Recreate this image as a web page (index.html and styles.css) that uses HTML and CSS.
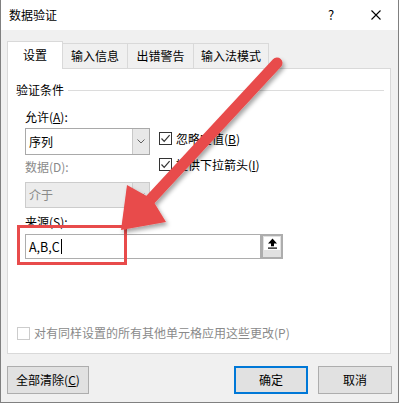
FILE: index.html
```html
<!DOCTYPE html>
<html lang="zh-CN">
<head>
<meta charset="utf-8">
<title>数据验证</title>
<link rel="stylesheet" href="styles.css">
</head>
<body>
<div class="window">
  <div class="titlebar">
    <span class="title">数据验证</span>
    <span class="help">?</span>
    <svg class="close" width="10" height="10" viewBox="0 0 10 10"><path d="M0.5 0.5 L9.5 9.5 M9.5 0.5 L0.5 9.5" stroke="#000" stroke-width="1.1" fill="none"/></svg>
  </div>
  <div class="tabs">
    <div class="tab active t1">设置</div>
    <div class="tab t2">输入信息</div>
    <div class="tab t3">出错警告</div>
    <div class="tab t4">输入法模式</div>
  </div>
  <div class="panel">
    <div class="group-title"><span>验证条件</span><span class="rule"></span></div>
    <div class="group">
      <div class="label l-allow">允许(<u>A</u>):</div>
      <div class="row">
        <div class="combo">
          <span class="combo-text">序列</span>
          <span class="combo-btn"><svg width="8" height="5" viewBox="0 0 8 5"><path d="M0.5 0.5 L4 4 L7.5 0.5" stroke="#606060" stroke-width="1" fill="none"/></svg></span>
        </div>
        <div class="checks">
          <div class="check"><span class="box"><svg width="11" height="11" viewBox="0 0 11 11"><path d="M1.5 5.5 L4.2 8.3 L9.6 2.2" stroke="#333" stroke-width="1.2" fill="none"/></svg></span><span>忽略空值(<u>B</u>)</span></div>
          <div class="check"><span class="box"><svg width="11" height="11" viewBox="0 0 11 11"><path d="M1.5 5.5 L4.2 8.3 L9.6 2.2" stroke="#333" stroke-width="1.2" fill="none"/></svg></span><span>提供下拉箭头(<u>I</u>)</span></div>
        </div>
      </div>
      <div class="label disabled l-data">数据(D):</div>
      <div class="combo combo-disabled">
        <span class="combo-text">介于</span>
        <span class="combo-btn"><svg width="8" height="5" viewBox="0 0 8 5"><path d="M0.5 0.5 L4 4 L7.5 0.5" stroke="#9a9a9a" stroke-width="1" fill="none"/></svg></span>
      </div>
      <div class="label l-src">来源(S):</div>
      <div class="source">
        <div class="source-input"><span>A,B,C</span><span class="caret"></span></div>
        <div class="source-btn"><span class="icon-box"><svg width="16" height="13" viewBox="0 0 16 13"><path d="M8.5 1.6 L13 6.6 L10 6.6 L10 9.3 L7 9.3 L7 6.6 L4 6.6 Z" fill="#000"/><rect x="4" y="10.5" width="9" height="1.2" fill="#000"/></svg></span></div>
      </div>
    </div>
    <div class="apply"><span class="box light"></span><span>对有同样设置的所有其他单元格应用这些更改(P)</span></div>
  </div>
  <div class="buttons">
    <div class="btn btn-clear">全部清除(<u>C</u>)</div>
    <div class="spacer"></div>
    <div class="btn btn-ok">确定</div>
    <div class="btn btn-cancel">取消</div>
  </div>
</div>
<svg class="annot" width="400" height="405" viewBox="0 0 400 405">
  <defs>
    <filter id="sh" x="-20%" y="-20%" width="140%" height="140%">
      <feDropShadow dx="2" dy="3" stdDeviation="2" flood-color="#000" flood-opacity="0.35"/>
    </filter>
  </defs>
  <rect x="18.5" y="226.5" width="107" height="37" fill="none" stroke="#e84b4b" stroke-width="3"/>
  <g filter="url(#sh)" fill="#e84b4b">
    <line x1="277" y1="63" x2="150" y2="200" stroke="#e84b4b" stroke-width="11" stroke-linecap="round"/>
    <polygon points="121,230 127,185 152,199 166,222"/>
  </g>
</svg>
</body>
</html>
```

FILE: styles.css
```css
* { box-sizing: border-box; }
html, body { margin: 0; padding: 0; }
body {
  width: 400px;
  height: 405px;
  background: #ffffff;
  font-family: "Noto Sans CJK SC", "Microsoft YaHei", sans-serif;
  font-size: 12px;
  color: #000;
  position: relative;
  overflow: hidden;
}
u { text-decoration: underline; text-underline-offset: 1px; }

.window {
  width: 399px;
  height: 403px;
  background: #f0f0f0;
  border: 1px solid #808080;
  border-top: none;
  display: flex;
  flex-direction: column;
}

.titlebar {
  height: 30px;
  background: #fff;
  display: flex;
  align-items: center;
  padding-left: 8px;
  padding-right: 17px;
  flex: none;
}
.title { flex: 1; line-height: 14px; }
.help { width: 12px; text-align: center; font-size: 13px; line-height: 14px; margin-right: 34px; }
.close { display: block; }

.tabs {
  display: flex;
  align-items: flex-end;
  padding-left: 6px;
  height: 38px;
  flex: none;
}
.tab {
  height: 25px;
  border: 1px solid #d9d9d9;
  border-bottom: none;
  background: #f0f0f0;
  display: flex;
  align-items: center;
  justify-content: center;
  line-height: 14px;
  margin-left: -1px;
}
.tab.t1 { margin-left: 0; width: 56px; }
.tab.t2 { width: 66px; }
.tab.t3 { width: 67px; }
.tab.t4 { width: 76px; }
.tab.active {
  height: 28px;
  margin-bottom: -1px;
  background: #fff;
  position: relative;
  z-index: 1;
  padding-bottom: 1px;
}

.panel {
  margin-left: 6px;
  width: 384px;
  height: 286px;
  background: #fff;
  border: 1px solid #d9d9d9;
  flex: none;
}

.group-title {
  display: flex;
  align-items: center;
  padding-left: 8px;
  padding-right: 6px;
  margin-top: 14px;
  height: 14px;
  line-height: 14px;
}
.rule { flex: 1; height: 1px; background: #dcdcdc; margin-left: 4px; }

.group { padding-left: 17px; }
.label { height: 14px; line-height: 14px; }
.l-allow { margin-top: 13px; }
.l-data { margin-top: 5px; }
.l-src { margin-top: 7px; }
.disabled { color: #8a8a8a; }

.row { display: flex; align-items: flex-start; margin-top: 4px; height: 27px; }

.combo {
  width: 125px;
  height: 27px;
  border: 1px solid #a9a9a9;
  background: #fff;
  display: flex;
  flex: none;
}
.combo-text { flex: 1; padding-left: 3px; line-height: 25px; }
.combo-btn {
  width: 17px;
  border-left: 1px solid #c8c8c8;
  background: #e8e8e8;
  display: flex;
  align-items: center;
  justify-content: center;
}
.combo-disabled {
  margin-top: 8px;
  border-color: #cccccc;
  background: #ececec;
  color: #8a8a8a;
  height: 26px;
}
.combo-disabled .combo-text { line-height: 24px; }
.combo-disabled .combo-btn { background: #e4e4e4; border-left-color: #d0d0d0; }

.checks {
  margin-left: 9px;
  padding-top: 4px;
  display: flex;
  flex-direction: column;
  gap: 13px;
}
.check { display: flex; align-items: center; height: 13px; line-height: 14px; }
.box {
  width: 13px;
  height: 13px;
  border: 1px solid #333;
  background: #fff;
  margin-right: 4px;
  display: flex;
  align-items: center;
  justify-content: center;
  flex: none;
}
.box.light { border-color: #cccccc; }

.source { display: flex; margin-top: 5px; height: 25px; }
.source-input {
  width: 236px;
  height: 25px;
  border: 1px solid #adadad;
  display: flex;
  align-items: center;
  padding-left: 3px;
  line-height: 14px;
  font-size: 12.5px;
}
.caret { width: 1px; height: 15px; background: #000; margin-left: 1px; }
.source-btn {
  width: 22px;
  height: 25px;
  border: 2px solid #adadad;
  background: #e1e1e1;
  padding: 1px 0 0 0;
  display: flex;
  justify-content: center;
  align-items: flex-start;
}
.icon-box { width: 16px; height: 13px; background: #fff; display: block; }
.icon-box svg { display: block; }

.apply {
  display: flex;
  align-items: center;
  margin-top: 67px;
  padding-left: 9px;
  height: 14px;
  line-height: 14px;
  color: #8a8a8a;
}

.buttons {
  display: flex;
  margin-top: 12px;
  padding-left: 6px;
  height: 28px;
  flex: none;
}
.btn {
  height: 28px;
  background: #e1e1e1;
  border: 1px solid #adadad;
  display: flex;
  align-items: center;
  justify-content: center;
  line-height: 14px;
}
.btn-clear { width: 82px; }
.spacer { flex: 1; }
.btn-ok { width: 74px; border: 2px solid #0078d7; }
.btn-cancel { width: 74px; margin-left: 10px; margin-right: 6px; }

.annot { position: absolute; left: 0; top: 0; pointer-events: none; }
```
